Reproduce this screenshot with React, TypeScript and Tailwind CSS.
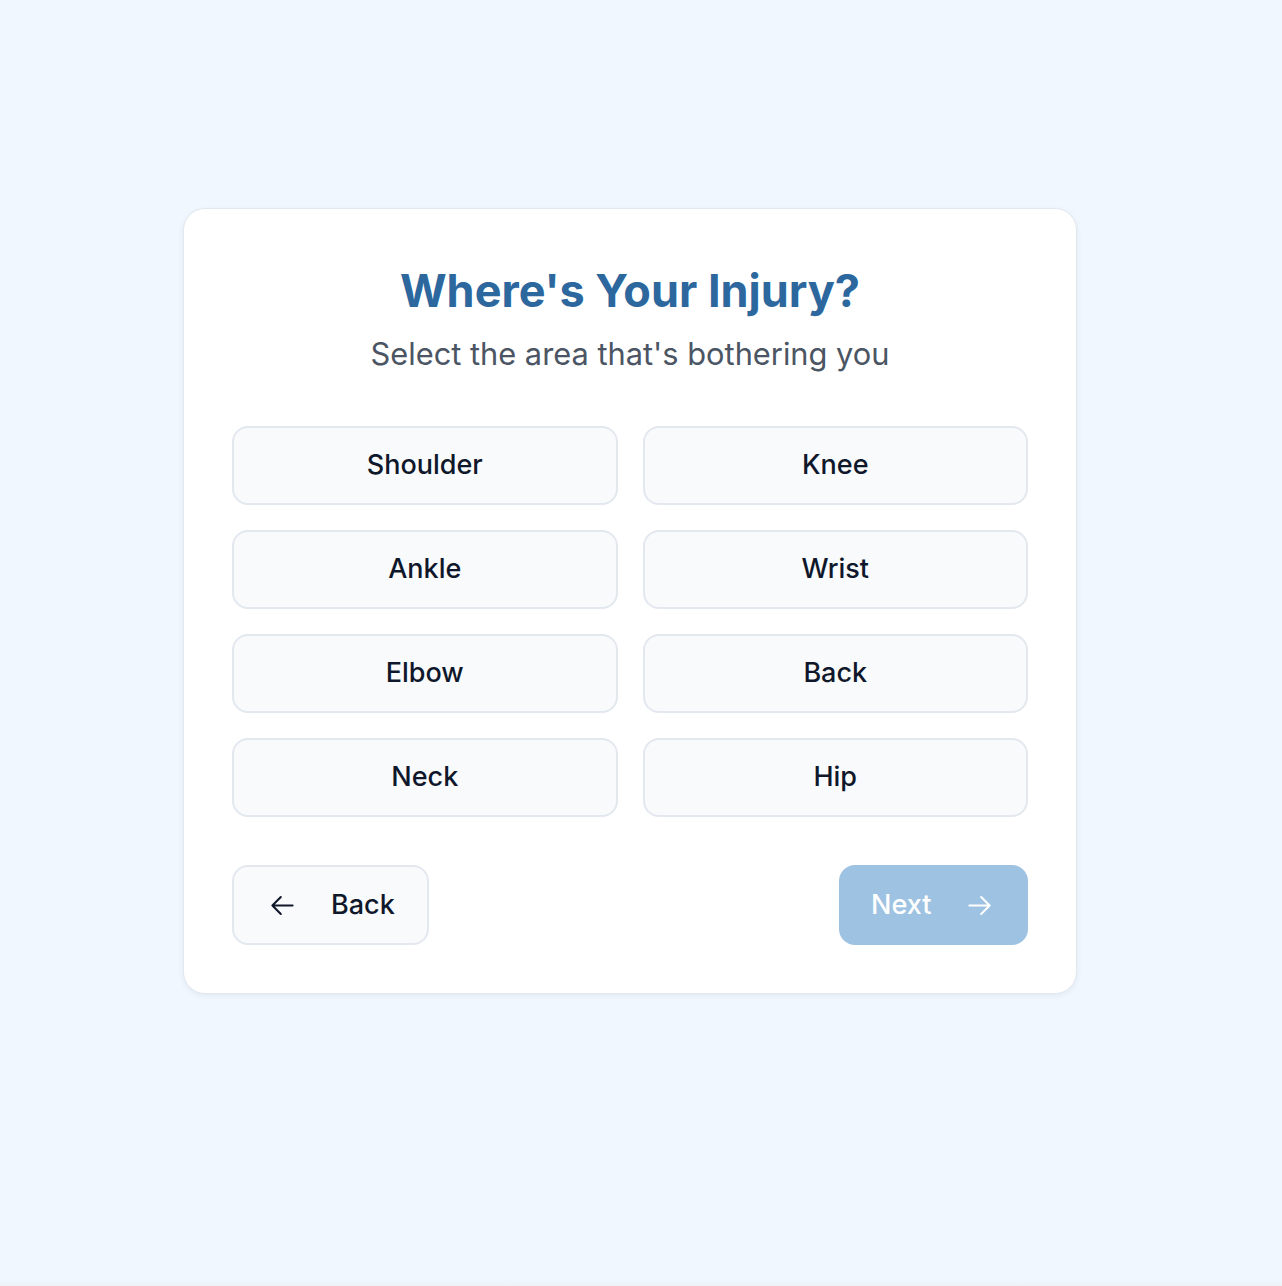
import React from "react";

const areas = ["Shoulder", "Knee", "Ankle", "Wrist", "Elbow", "Back", "Neck", "Hip"];

function Arrow({ dir }: { dir: "left" | "right" }) {
  return (
    <svg
      width="27"
      height="27"
      viewBox="0 0 24 24"
      fill="none"
      stroke="currentColor"
      strokeWidth={1.8}
      strokeLinecap="round"
      strokeLinejoin="round"
      className="shrink-0"
    >
      {dir === "left" ? (
        <path d="M10.5 19.5 3 12m0 0 7.5-7.5M3 12h18" />
      ) : (
        <path d="M13.5 4.5 21 12m0 0-7.5 7.5M21 12H3" />
      )}
    </svg>
  );
}

export default function App() {
  return (
    <div
      className="relative min-h-screen w-full bg-[#f0f7ff] flex flex-col"
      style={{ fontFamily: "Inter, 'Noto Sans', sans-serif" }}
    >
      <div className="w-[1260px] pt-[208px] flex justify-center">
        <div className="w-[894px] rounded-[22px] border border-[#e3e8ef] bg-white px-12 pt-12 pb-12 shadow-[0_2px_6px_rgba(15,23,42,0.06)]">
          <div className="flex flex-col items-center text-center">
            <h1 className="text-[45px] leading-[68px] font-bold text-[#2c689e]">
              Where's Your Injury?
            </h1>
            <p className="mt-[9px] text-[30.8px] leading-[40px] text-[#4b5563]">
              Select the area that's bothering you
            </p>
          </div>

          <div className="mt-[52px] grid grid-cols-2 gap-x-[25px] gap-y-[25px]">
            {areas.map((a) => (
              <button
                key={a}
                className="h-[79px] rounded-[16px] border-2 border-[#e3e8ef] bg-[#f8fafc] text-[27px] font-medium text-[#0f172a]"
              >
                {a}
              </button>
            ))}
          </div>

          <div className="mt-[48px] flex items-center justify-between">
            <button className="flex h-[80px] w-[197px] items-center gap-[35px] rounded-[16px] border-2 border-[#e3e8ef] bg-[#f8fafc] pl-[35px] text-[27px] font-medium text-[#0f172a]">
              <Arrow dir="left" />
              <span>Back</span>
            </button>
            <button className="flex h-[80px] w-[189px] items-center gap-[35px] rounded-[16px] bg-[#9ec2e1] pl-[32px] text-[27px] font-medium text-white">
              <span>Next</span>
              <Arrow dir="right" />
            </button>
          </div>
        </div>
      </div>
      <div className="mt-auto h-[6px] w-full bg-gradient-to-b from-[#f0f7ff] to-[#eef2f6]" />
    </div>
  );
}
